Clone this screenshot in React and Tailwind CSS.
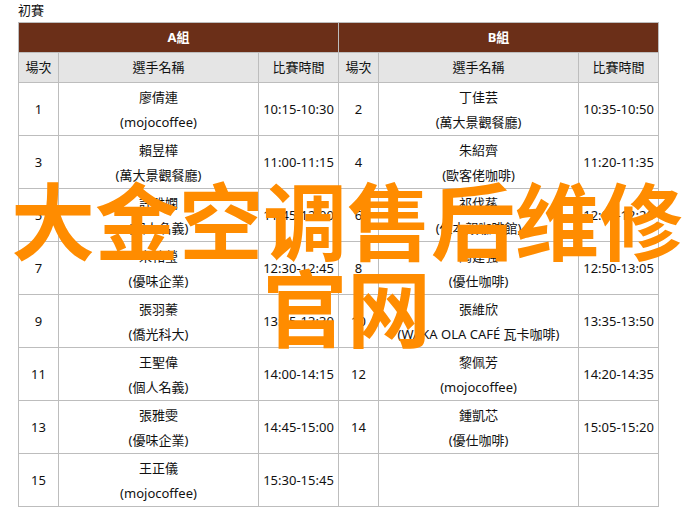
const a = [
  ['1','廖倩連','(mojocoffee)','10:15-10:30','2','丁佳芸','(萬大景觀餐廳)','10:35-10:50'],
  ['3','賴昱樺','(萬大景觀餐廳)','11:00-11:15','4','朱紹齊','(歐客佬咖啡)','11:20-11:35'],
  ['5','許雅嫻','(個人名義)','11:45-12:00','6','祁伐蓀','(佐本韻咖啡館)','12:05-12:20'],
  ['7','宋祐瑩','(優味企業)','12:30-12:45','8','陶建強','(優仕咖啡)','12:50-13:05'],
  ['9','張羽蓁','(僑光科大)','13:15-13:30','10','張維欣','(WAKA OLA CAFÉ 瓦卡咖啡)','13:35-13:50'],
  ['11','王聖偉','(個人名義)','14:00-14:15','12','黎佩芳','(mojocoffee)','14:20-14:35'],
  ['13','張雅雯','(優味企業)','14:45-15:00','14','鍾凱芯','(優仕咖啡)','15:05-15:20'],
  ['15','王正儀','(mojocoffee)','15:30-15:45','','','',''],
];
const td = 'border border-[#bdbdbd] text-center align-middle p-0';
const single = 'border border-[#bdbdbd] text-center align-middle p-0 pt-[2px]';
const th = 'border border-[#bdbdbd] bg-[#e5e5e5] font-normal p-0 pt-[1px]';
const Head = () => (
  <>
    <th className={th}>場次</th>
    <th className={th}>選手名稱</th>
    <th className={th}>比賽時間</th>
  </>
);
const Cols = () => (
  <>
    <col className="w-10" />
    <col className="w-[200px]" />
    <col className="w-20" />
  </>
);
const Two = ({ top, bottom }) => (
  <>
    <div className="h-[24px] leading-[24px] whitespace-nowrap">{top}</div>
    <div className="h-[25px] leading-[25px] pt-[1px] whitespace-nowrap">{bottom}</div>
  </>
);
export default function App() {
  return (
    <div className="relative w-[694px] h-[509px] overflow-hidden bg-white text-[#111] text-[13px] font-['Noto_Sans','Noto_Sans_CJK_TC',sans-serif]">
      <div className="pl-[18px] pt-[1px]">
        <div className="h-[21px] leading-[19px]">初賽</div>
        <table className="table-fixed border-collapse w-[641px]">
          <colgroup><Cols /><Cols /></colgroup>
          <thead>
            <tr className="h-[30px]">
              <th colSpan={3} className="border border-[#bdbdbd] bg-[#6b2f18] text-white font-bold p-0">A組</th>
              <th colSpan={3} className="border border-[#bdbdbd] bg-[#6b2f18] text-white font-bold p-0">B組</th>
            </tr>
            <tr className="h-[30px]"><Head /><Head /></tr>
          </thead>
          <tbody>
            {a.map((r) => (
              <tr key={r[0]} className="h-[53px]">
                <td className={single}>{r[0]}</td>
                <td className={td}><Two top={r[1]} bottom={r[2]} /></td>
                <td className={single}>{r[3]}</td>
                <td className={single}>{r[4]}</td>
                <td className={td}>{r[5] && <Two top={r[5]} bottom={r[6]} />}</td>
                <td className={single}>{r[7]}</td>
              </tr>
            ))}
          </tbody>
        </table>
      </div>
      <div className="absolute left-[7px] top-[174px] w-[680px] text-center text-[84px] leading-[87px] font-bold text-[#ff8c00] font-['Noto_Sans_CJK_SC',sans-serif]">大金空调售后维修官网</div>
    </div>
  );
}
